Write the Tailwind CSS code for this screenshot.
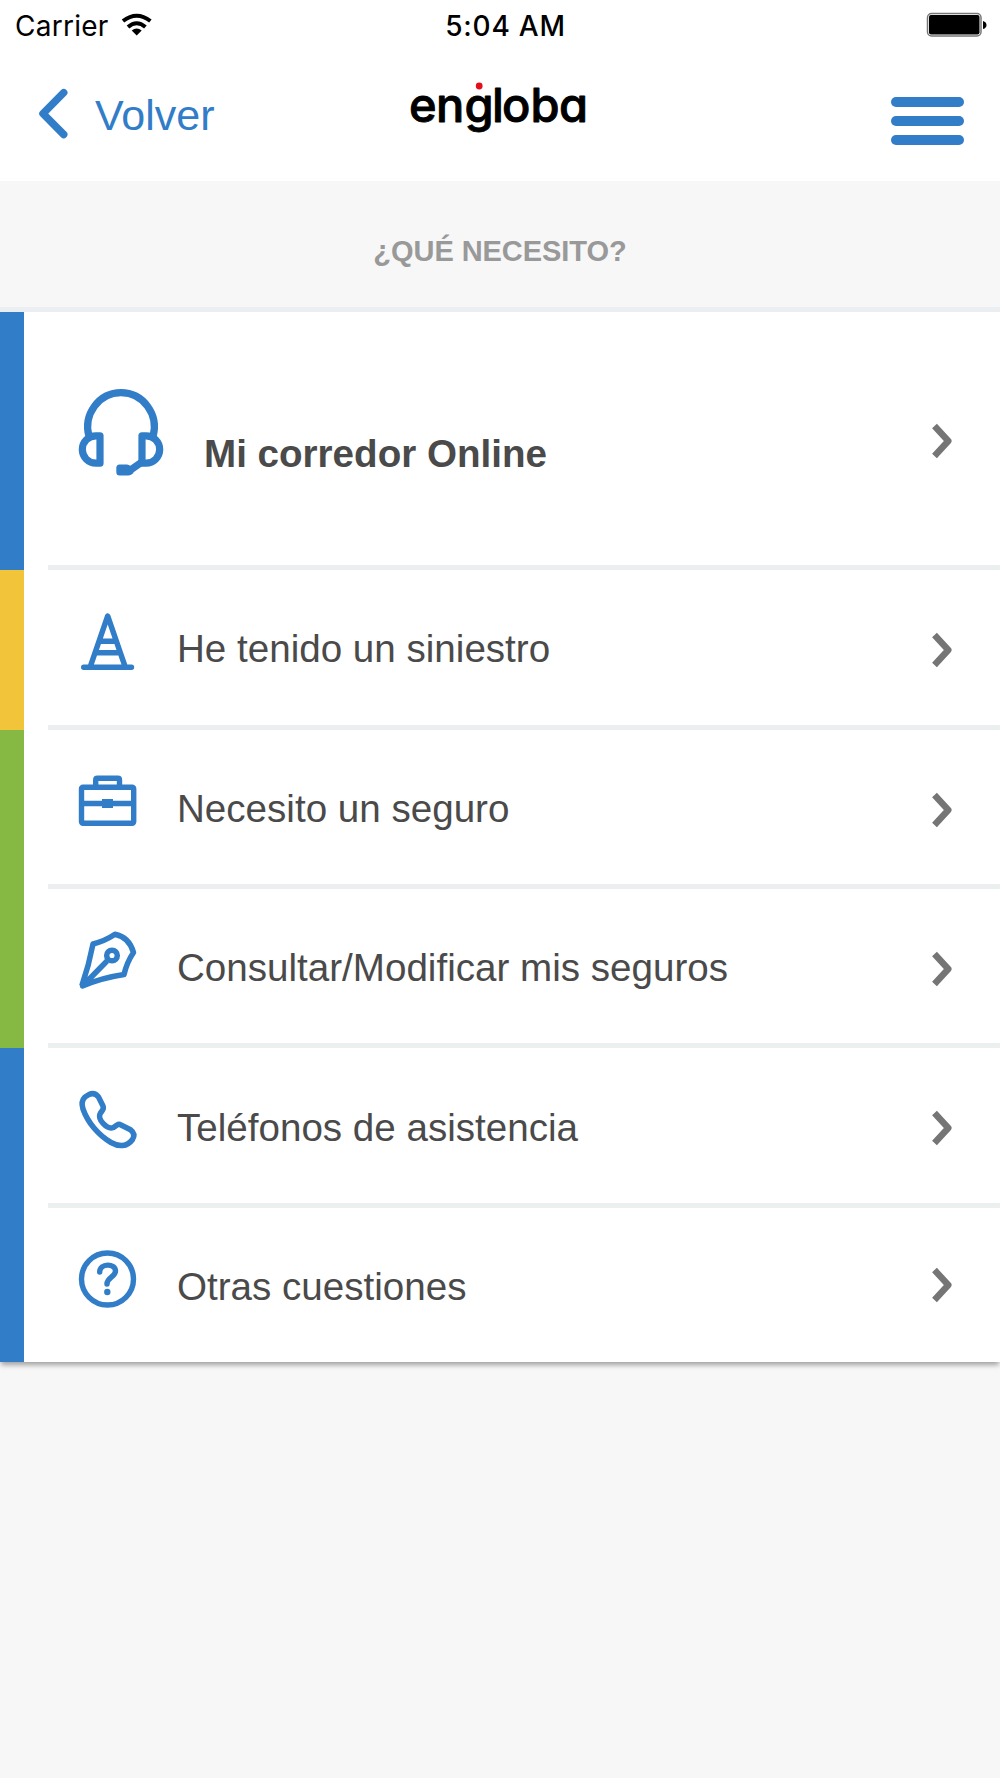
<!DOCTYPE html>
<html lang="es">
<head>
<meta charset="utf-8">
<title>engloba</title>
<script src="https://cdn.jsdelivr.net/npm/@tailwindcss/browser@4"></script>
</head>
<body class="w-[1000px] h-[1778px] bg-[#f7f7f7] font-['Liberation_Sans',Arial,sans-serif] text-[#4a4a4a] overflow-hidden">

<header class="h-[181px] bg-white">
  <div class="grid grid-cols-3 h-[52px] items-center text-black font-['Inter',sans-serif]">
    <div class="flex items-center gap-[12px] pl-[15px]">
      <span class="text-[28px] leading-[52px] -mt-px tracking-[0.25px]">Carrier</span>
      <svg class="w-[32px] h-[24px] -mt-[3px]" viewBox="120 12 32 24" fill="none" stroke="#000" stroke-width="4"><path d="M122 20Q135.700 9.500 149.400 20M127 26Q135.700 18.500 144.400 26"/><path d="M130.700 29.500Q135.700 25.500 140.700 29.500L135.700 34.500Z" fill="#000" stroke="none"/></svg>
    </div>
    <span class="text-center text-[28px] leading-[52px] font-medium tracking-[0.8px] -mt-px pl-[11px]">5:04 AM</span>
    <div class="flex justify-end pr-[13px] -mt-[2px]">
      <svg class="w-[61px] h-[26px]" viewBox="926 12 61 26"><rect x="927.500" y="13.500" width="53.500" height="22.500" rx="4" fill="#fff" stroke="#777" stroke-width="1.500"/><rect x="929" y="15" width="50.500" height="19.500" rx="2" fill="#000"/><path d="M983 21q3.500 1 3.500 4t-3.500 4z"/></svg>
    </div>
  </div>
  <div class="grid grid-cols-3 h-[129px] text-[#317dc8]">
    <a class="flex items-start pl-[36px]">
      <svg class="w-[36px] h-[56px] mt-[34px]" viewBox="36 86 36 56" fill="none" stroke="currentColor" stroke-width="7.500" stroke-linecap="round" stroke-linejoin="round"><path d="M63.700 92.700L43 113.600L63.700 134.500"/></svg>
      <span class="ml-[23px] mt-[39px] text-[43px] leading-[48px]">Volver</span>
    </a>
    <svg class="w-[334px] h-[110px]" viewBox="333 52 334 110"><text x="409 436 464.500 492 502 530.500 559" y="121.700" font-family="Inter, sans-serif" font-size="47" font-weight="500" fill="#000" stroke="#000" stroke-width="0.900" stroke-linejoin="round" style="font-feature-settings:'cv11'">engloba</text><circle cx="479.200" cy="86" r="3.400" fill="#e30d1b"/></svg>
    <div class="flex flex-col items-end gap-[9px] pt-[44.500px] pr-[36px]">
      <div class="w-[73px] h-[10px] rounded-full bg-[#317dc8]"></div>
      <div class="w-[73px] h-[10px] rounded-full bg-[#317dc8]"></div>
      <div class="w-[73px] h-[10px] rounded-full bg-[#317dc8]"></div>
    </div>
  </div>
</header>

<h1 class="h-[131px] border-b-[5px] border-[#ebeff1] pt-[50px] text-center text-[29px] leading-[40px] font-bold tracking-[-0.050px] text-[#999]">¿QUÉ NECESITO?</h1>

<main class="bg-white shadow-[0_4px_5px_-1px_rgba(0,0,0,0.35)]">
  <a class="flex h-[258px] border-l-[24px] border-[#317dc8] pl-[24px]">
    <div class="flex grow items-center border-b-[5px] border-[#ebeff0] pl-[28px] pr-[46px]">
      <svg class="w-[92px] h-[96px] -mt-[15px]" viewBox="76 384 92 96" fill="none" stroke="#317dc8" stroke-width="7.200" stroke-linejoin="round"><path d="M89 437.500A33.300 34.300 0 1 1 153 437.500"/><path d="M100 436.800V464.200H96A13.700 13.700 0 0 1 96 436.800ZM142 436.800V464.200H146A13.700 13.700 0 0 0 146 436.800Z"/><path d="M142 463L129 472"/><path d="M119.500 465.500H127Q129 465.500 130.500 467L133.500 474L131.500 475.500Q130 476.500 128 476.500H119.500Q116.300 476.500 116.300 473V469Q116.300 465.500 119.500 465.500Z" fill="#317dc8" stroke="none"/></svg>
      <span class="grow ml-[36px] mt-[30px] text-[38.600px] leading-[48px] font-bold">Mi corredor Online</span>
      <svg class="w-[26px] h-[42px] mt-[5px]" viewBox="0 0 26 42" fill="none" stroke="#757575" stroke-width="6.500" stroke-linejoin="round"><path d="M6.500 6L20.300 21L6.500 36"/></svg>
    </div>
  </a>
  <a class="flex h-[160px] border-l-[24px] border-[#f2c43a] pl-[24px]">
    <div class="flex grow items-center border-b-[5px] border-[#ebeff0] pl-[28px] pr-[46px]">
      <svg class="w-[64px] h-[64px] -mt-[12px]" viewBox="76 610 64 64" fill="none" stroke="#317dc8" stroke-width="5.400" stroke-linecap="round" stroke-linejoin="round"><path d="M83.700 667.300H131.500M90.500 666L107.700 616L124.900 666M101.500 641.200H114M97.500 652.700H118"/></svg>
      <span class="grow ml-[37px] mt-[3px] text-[38.600px] leading-[48px]">He tenido un siniestro</span>
      <svg class="w-[26px] h-[42px] mt-[5px]" viewBox="0 0 26 42" fill="none" stroke="#757575" stroke-width="6.500" stroke-linejoin="round"><path d="M6.500 6L20.300 21L6.500 36"/></svg>
    </div>
  </a>
  <a class="flex h-[159px] border-l-[24px] border-[#86b944] pl-[24px]">
    <div class="flex grow items-center border-b-[5px] border-[#ebeff0] pl-[28px] pr-[46px]">
      <svg class="w-[64px] h-[64px] -mt-[13px]" viewBox="76 769 64 64" fill="none" stroke="#317dc8" stroke-width="5.400" stroke-linejoin="round"><rect x="81.500" y="787.200" width="52.200" height="36" rx="1.500"/><path d="M81.500 803.500H133.700M95.700 786V780Q95.700 778.300 97.400 778.300H117.800Q119.500 778.300 119.500 780V786"/><path d="M102 799H113V808H102Z" fill="#317dc8" stroke="none"/></svg>
      <span class="grow ml-[37px] mt-[4px] text-[38.600px] leading-[48px]">Necesito un seguro</span>
      <svg class="w-[26px] h-[42px] mt-[5px]" viewBox="0 0 26 42" fill="none" stroke="#757575" stroke-width="6.500" stroke-linejoin="round"><path d="M6.500 6L20.300 21L6.500 36"/></svg>
    </div>
  </a>
  <a class="flex h-[159px] border-l-[24px] border-[#86b944] pl-[24px]">
    <div class="flex grow items-center border-b-[5px] border-[#ebeff0] pl-[28px] pr-[46px]">
      <svg class="w-[64px] h-[64px] -mt-[13px]" viewBox="76 928 64 64" fill="none" stroke="#317dc8" stroke-width="5.500" stroke-linejoin="round"><path d="M81.800 986Q89 965 93 944Q105 941 115 934.300Q129 937 133.500 952.500Q127 962 124 974.500Q101 978 82.500 986L107 961"/><circle cx="112" cy="955.500" r="5.300"/></svg>
      <span class="grow ml-[37px] mt-[4px] text-[38.600px] leading-[48px]">Consultar/Modificar mis seguros</span>
      <svg class="w-[26px] h-[42px] mt-[5px]" viewBox="0 0 26 42" fill="none" stroke="#757575" stroke-width="6.500" stroke-linejoin="round"><path d="M6.500 6L20.300 21L6.500 36"/></svg>
    </div>
  </a>
  <a class="flex h-[160px] border-l-[24px] border-[#317dc8] pl-[24px]">
    <div class="flex grow items-center border-b-[5px] border-[#ebeff0] pl-[28px] pr-[46px]">
      <svg class="w-[64px] h-[64px] -mt-[11px]" viewBox="76 1088 64 64" fill="none" stroke="#317dc8" stroke-width="5.500" stroke-linejoin="round"><path d="M85 1097L89 1094.500Q94.500 1092 98.500 1097L103 1106Q104 1108.500 102 1111L100.500 1113C96.500 1119 107 1130 113.500 1127.500L117 1125Q119 1123.800 121 1125L130.500 1129.800Q136 1134 132.500 1139.500C127 1147 119 1147 111 1142.500C98 1135 87.500 1122 83 1109Q80.500 1101.500 85 1097Z"/></svg>
      <span class="grow ml-[37px] mt-[4px] text-[38.600px] leading-[48px]">Teléfonos de asistencia</span>
      <svg class="w-[26px] h-[42px] mt-[5px]" viewBox="0 0 26 42" fill="none" stroke="#757575" stroke-width="6.500" stroke-linejoin="round"><path d="M6.500 6L20.300 21L6.500 36"/></svg>
    </div>
  </a>
  <a class="flex h-[154px] border-l-[24px] border-[#317dc8] pl-[24px]">
    <div class="flex grow items-center pl-[28px] pr-[46px]">
      <svg class="w-[64px] h-[64px] -mt-[13px]" viewBox="76 1247 64 64" fill="none" stroke="#317dc8" stroke-width="5.400" stroke-linecap="round"><circle cx="107.500" cy="1279" r="26"/><path d="M99.700 1272C99.700 1263 115.500 1263 115.500 1271C115.500 1277 107 1277.500 107 1284"/><circle cx="107.300" cy="1292" r="3.200" fill="#317dc8" stroke="none"/></svg>
      <span class="grow ml-[37px] mt-[4px] text-[38.600px] leading-[48px]">Otras cuestiones</span>
      <svg class="w-[26px] h-[42px]" viewBox="0 0 26 42" fill="none" stroke="#757575" stroke-width="6.500" stroke-linejoin="round"><path d="M6.500 6L20.300 21L6.500 36"/></svg>
    </div>
  </a>
</main>
</body>
</html>
